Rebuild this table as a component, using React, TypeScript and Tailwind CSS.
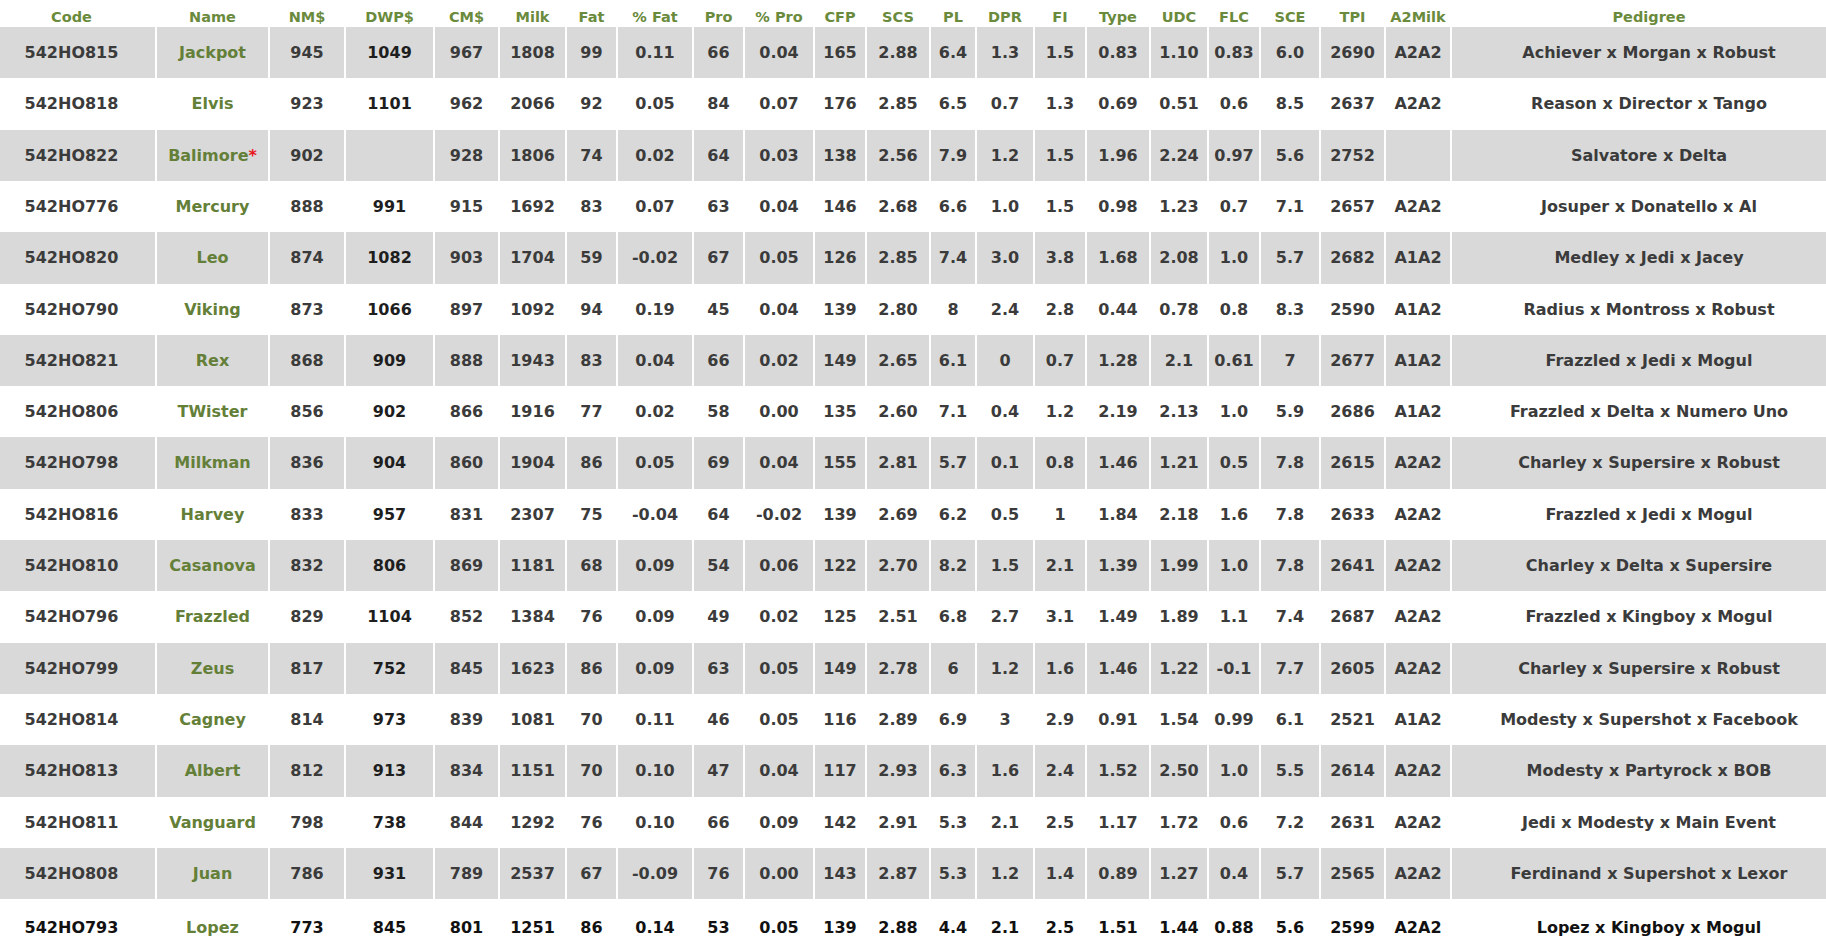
import React from "react";

type Bull = {
  code: string;
  name: string;
  star?: boolean;
  vals: string[];
  a2: string;
  pedigree: string;
};

const headers = [
  "Code", "Name", "NM$", "DWP$", "CM$", "Milk", "Fat", "% Fat", "Pro", "% Pro", "CFP",
  "SCS", "PL", "DPR", "FI", "Type", "UDC", "FLC", "SCE", "TPI", "A2Milk", "Pedigree",
];

const widths = [
  "w-[167px]", "w-[111px]", "w-[74px]", "w-[87px]", "w-[63px]", "w-[65px]", "w-[49px]",
  "w-[74px]", "w-[49px]", "w-[68px]", "w-[50px]", "w-[62px]", "w-[44px]", "w-[56px]",
  "w-[50px]", "w-[62px]", "w-[56px]", "w-[50px]", "w-[58px]", "w-[63px]", "w-[64px]", "w-[394px]",
];

// vals: NM$ DWP$ CM$ Milk Fat %Fat Pro %Pro CFP SCS PL DPR FI Type UDC FLC SCE TPI
const bulls: Bull[] = [
  { code: "542HO815", name: "Jackpot", vals: ["945", "1049", "967", "1808", "99", "0.11", "66", "0.04", "165", "2.88", "6.4", "1.3", "1.5", "0.83", "1.10", "0.83", "6.0", "2690"], a2: "A2A2", pedigree: "Achiever x Morgan x Robust" },
  { code: "542HO818", name: "Elvis", vals: ["923", "1101", "962", "2066", "92", "0.05", "84", "0.07", "176", "2.85", "6.5", "0.7", "1.3", "0.69", "0.51", "0.6", "8.5", "2637"], a2: "A2A2", pedigree: "Reason x Director x Tango" },
  { code: "542HO822", name: "Balimore", star: true, vals: ["902", "", "928", "1806", "74", "0.02", "64", "0.03", "138", "2.56", "7.9", "1.2", "1.5", "1.96", "2.24", "0.97", "5.6", "2752"], a2: "", pedigree: "Salvatore x Delta" },
  { code: "542HO776", name: "Mercury", vals: ["888", "991", "915", "1692", "83", "0.07", "63", "0.04", "146", "2.68", "6.6", "1.0", "1.5", "0.98", "1.23", "0.7", "7.1", "2657"], a2: "A2A2", pedigree: "Josuper x Donatello x Al" },
  { code: "542HO820", name: "Leo", vals: ["874", "1082", "903", "1704", "59", "-0.02", "67", "0.05", "126", "2.85", "7.4", "3.0", "3.8", "1.68", "2.08", "1.0", "5.7", "2682"], a2: "A1A2", pedigree: "Medley x Jedi x Jacey" },
  { code: "542HO790", name: "Viking", vals: ["873", "1066", "897", "1092", "94", "0.19", "45", "0.04", "139", "2.80", "8", "2.4", "2.8", "0.44", "0.78", "0.8", "8.3", "2590"], a2: "A1A2", pedigree: "Radius x Montross x Robust" },
  { code: "542HO821", name: "Rex", vals: ["868", "909", "888", "1943", "83", "0.04", "66", "0.02", "149", "2.65", "6.1", "0", "0.7", "1.28", "2.1", "0.61", "7", "2677"], a2: "A1A2", pedigree: "Frazzled x Jedi x Mogul" },
  { code: "542HO806", name: "TWister", vals: ["856", "902", "866", "1916", "77", "0.02", "58", "0.00", "135", "2.60", "7.1", "0.4", "1.2", "2.19", "2.13", "1.0", "5.9", "2686"], a2: "A1A2", pedigree: "Frazzled x Delta x Numero Uno" },
  { code: "542HO798", name: "Milkman", vals: ["836", "904", "860", "1904", "86", "0.05", "69", "0.04", "155", "2.81", "5.7", "0.1", "0.8", "1.46", "1.21", "0.5", "7.8", "2615"], a2: "A2A2", pedigree: "Charley x Supersire x Robust" },
  { code: "542HO816", name: "Harvey", vals: ["833", "957", "831", "2307", "75", "-0.04", "64", "-0.02", "139", "2.69", "6.2", "0.5", "1", "1.84", "2.18", "1.6", "7.8", "2633"], a2: "A2A2", pedigree: "Frazzled x Jedi x Mogul" },
  { code: "542HO810", name: "Casanova", vals: ["832", "806", "869", "1181", "68", "0.09", "54", "0.06", "122", "2.70", "8.2", "1.5", "2.1", "1.39", "1.99", "1.0", "7.8", "2641"], a2: "A2A2", pedigree: "Charley x Delta x Supersire" },
  { code: "542HO796", name: "Frazzled", vals: ["829", "1104", "852", "1384", "76", "0.09", "49", "0.02", "125", "2.51", "6.8", "2.7", "3.1", "1.49", "1.89", "1.1", "7.4", "2687"], a2: "A2A2", pedigree: "Frazzled x Kingboy x Mogul" },
  { code: "542HO799", name: "Zeus", vals: ["817", "752", "845", "1623", "86", "0.09", "63", "0.05", "149", "2.78", "6", "1.2", "1.6", "1.46", "1.22", "-0.1", "7.7", "2605"], a2: "A2A2", pedigree: "Charley x Supersire x Robust" },
  { code: "542HO814", name: "Cagney", vals: ["814", "973", "839", "1081", "70", "0.11", "46", "0.05", "116", "2.89", "6.9", "3", "2.9", "0.91", "1.54", "0.99", "6.1", "2521"], a2: "A1A2", pedigree: "Modesty x Supershot x Facebook" },
  { code: "542HO813", name: "Albert", vals: ["812", "913", "834", "1151", "70", "0.10", "47", "0.04", "117", "2.93", "6.3", "1.6", "2.4", "1.52", "2.50", "1.0", "5.5", "2614"], a2: "A2A2", pedigree: "Modesty x Partyrock x BOB" },
  { code: "542HO811", name: "Vanguard", vals: ["798", "738", "844", "1292", "76", "0.10", "66", "0.09", "142", "2.91", "5.3", "2.1", "2.5", "1.17", "1.72", "0.6", "7.2", "2631"], a2: "A2A2", pedigree: "Jedi x Modesty x Main Event" },
  { code: "542HO808", name: "Juan", vals: ["786", "931", "789", "2537", "67", "-0.09", "76", "0.00", "143", "2.87", "5.3", "1.2", "1.4", "0.89", "1.27", "0.4", "5.7", "2565"], a2: "A2A2", pedigree: "Ferdinand x Supershot x Lexor" },
  { code: "542HO793", name: "Lopez", vals: ["773", "845", "801", "1251", "86", "0.14", "53", "0.05", "139", "2.88", "4.4", "2.1", "2.5", "1.51", "1.44", "0.88", "5.6", "2599"], a2: "A2A2", pedigree: "Lopez x Kingboy x Mogul" },
];

// rows are ~51.3px apart, so alternate 51/52 to keep the pitch
const rowHeight = (r: number) =>
  Math.round(51.3 * (r + 1)) - Math.round(51.3 * r) === 52 ? "h-[52px]" : "h-[51px]";

export default function App() {
  return (
    <div className="w-[1826px] h-[950px] overflow-hidden bg-white font-['DejaVu_Sans',Verdana,sans-serif]">
      <table className="-ml-[14px] w-[1862px] min-w-[1862px] table-fixed border-separate border-spacing-x-[2px] border-spacing-y-0 text-center font-bold">
        <thead>
          <tr>
            {headers.map((h, i) => (
              <th
                key={h}
                className={`${widths[i]} h-[27px] p-0 pb-[3px] align-bottom text-[14.5px] font-bold leading-none text-[#6a8a3c]`}
              >
                {h}
              </th>
            ))}
          </tr>
        </thead>
        <tbody>
          {bulls.map((b, r) => {
            const last = r === bulls.length - 1;
            const rowBg = r % 2 === 0 ? "bg-[#d9d9d9]" : "bg-white";
            const txt = last ? "text-[#111111]" : "text-[#3b3b3b]";
            const pad = last ? "p-0 pt-[6px]" : "p-0";
            const cell = `${rowHeight(r)} ${pad} align-middle text-[16px] leading-none ${rowBg}`;
            return (
              <tr key={b.code}>
                <td className={`${cell} ${txt}`}>{b.code}</td>
                <td className={`${cell} text-[#647f38]`}>
                  {b.name}
                  {b.star && <span className="text-[#e8141b]">*</span>}
                </td>
                {b.vals.map((v, i) => (
                  <td key={i} className={`${cell} ${i === 1 && !last ? "text-[#1e1e1e]" : txt}`}>
                    {v}
                  </td>
                ))}
                <td className={`${cell} ${txt}`}>{b.a2}</td>
                <td className={`${cell} ${txt}`}>{b.pedigree}</td>
              </tr>
            );
          })}
        </tbody>
      </table>
    </div>
  );
}
